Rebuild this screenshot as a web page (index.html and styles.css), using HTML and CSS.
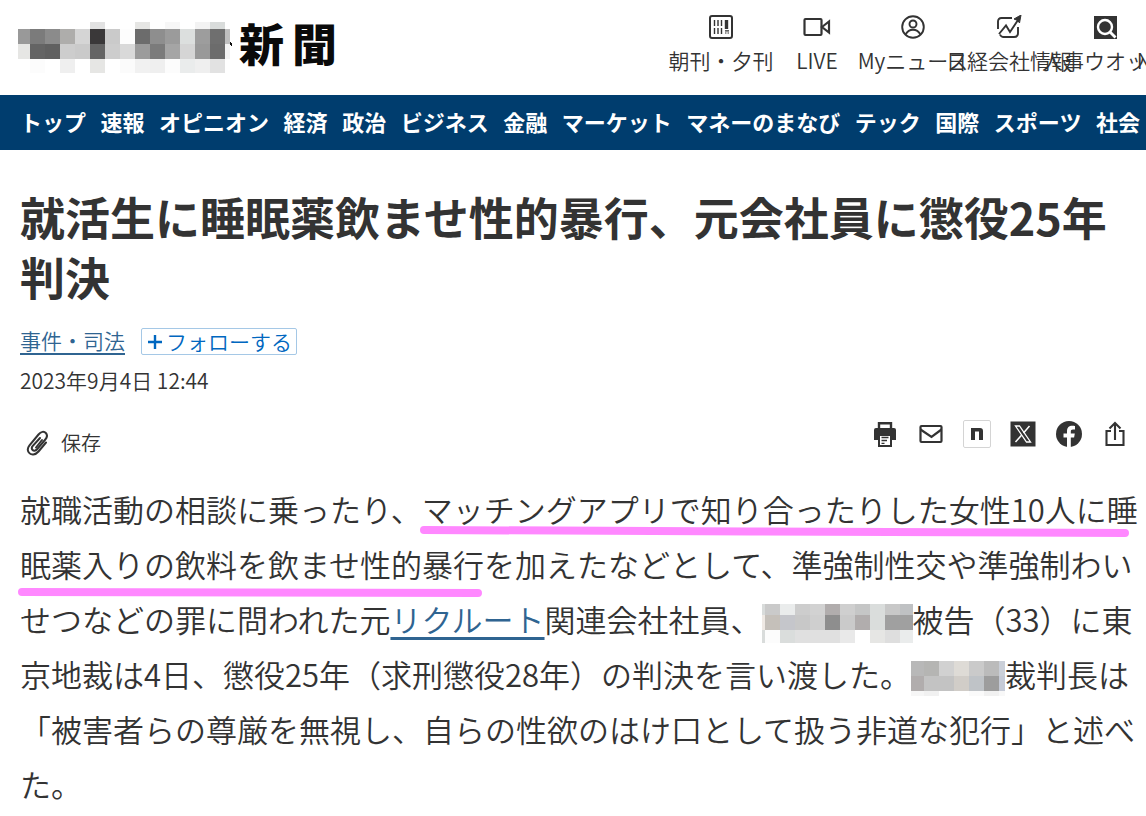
FILE: index.html
```html
<!DOCTYPE html>
<html lang="ja">
<head>
<meta charset="utf-8">
<meta name="viewport" content="width=device-width, initial-scale=1">
<title>就活生に睡眠薬飲ませ性的暴行、元会社員に懲役25年判決</title>
<link rel="stylesheet" href="styles.css">
</head>
<body>
<header class="site-header">
  <a class="brand" href="#">
    <svg class="brand-mosaic" width="216" height="51" viewBox="18 23 216 51" shape-rendering="crispEdges" aria-hidden="true">
      <g><rect x="90" y="23" width="15" height="7" fill="#e2e2e2"/><rect x="135" y="23" width="15" height="7" fill="#e6e6e4"/><rect x="165" y="23" width="15" height="7" fill="#f7f7f7"/><rect x="195" y="23" width="15" height="7" fill="#f3f3f3"/><rect x="210" y="23" width="15" height="7" fill="#d9dcdb"/></g>
      <g><rect x="18" y="30" width="12" height="15" fill="#999"/><rect x="30" y="30" width="15" height="15" fill="#7b7b7b"/><rect x="45" y="30" width="15" height="15" fill="#8b8b8b"/><rect x="60" y="30" width="15" height="15" fill="#aeadab"/><rect x="75" y="30" width="15" height="15" fill="#d5d5d5"/><rect x="90" y="30" width="15" height="15" fill="#3a3839"/><rect x="105" y="30" width="15" height="15" fill="#cacaca"/><rect x="120" y="30" width="15" height="15" fill="#fdfdfd"/><rect x="135" y="30" width="15" height="15" fill="#6c6c6c"/><rect x="150" y="30" width="15" height="15" fill="#8e8e8e"/><rect x="165" y="30" width="15" height="15" fill="#9b9b9b"/><rect x="180" y="30" width="15" height="15" fill="#dcdfde"/><rect x="195" y="30" width="15" height="15" fill="#9d9d9d"/><rect x="210" y="30" width="15" height="15" fill="#6f6f6f"/><rect x="225" y="30" width="5" height="15" fill="#bfbfbf"/></g>
      <g><rect x="18" y="45" width="12" height="15" fill="#e6e6e4"/><rect x="30" y="45" width="15" height="15" fill="#646464"/><rect x="45" y="45" width="15" height="15" fill="#606060"/><rect x="60" y="45" width="15" height="15" fill="#cdcdcd"/><rect x="75" y="45" width="15" height="15" fill="#cacaca"/><rect x="90" y="45" width="15" height="15" fill="#646464"/><rect x="105" y="45" width="15" height="15" fill="#cdcdcd"/><rect x="120" y="45" width="15" height="15" fill="#d9d9d9"/><rect x="135" y="45" width="15" height="15" fill="#9b9b9b"/><rect x="150" y="45" width="15" height="15" fill="#7b7b7b"/><rect x="165" y="45" width="15" height="15" fill="#a5a5a5"/><rect x="180" y="45" width="15" height="15" fill="#d5d5d5"/><rect x="195" y="45" width="15" height="15" fill="#999"/><rect x="210" y="45" width="15" height="15" fill="#6c6c6c"/><rect x="225" y="45" width="5" height="15" fill="#f3f3f3"/></g>
      <g><rect x="30" y="60" width="15" height="14" fill="#fcfcfc"/><rect x="60" y="60" width="15" height="14" fill="#efefef"/><rect x="90" y="60" width="15" height="14" fill="#e6e6e4"/><rect x="120" y="60" width="15" height="14" fill="#fbfbfb"/><rect x="135" y="60" width="15" height="14" fill="#f1f1f1"/><rect x="150" y="60" width="15" height="14" fill="#efefef"/><rect x="165" y="60" width="15" height="14" fill="#fcfcfc"/><rect x="180" y="60" width="15" height="14" fill="#eaecec"/><rect x="195" y="60" width="15" height="14" fill="#efefef"/><rect x="210" y="60" width="15" height="14" fill="#e2e2e2"/></g>
      <path d="M230 43l2 1v3l-2-1z" fill="#111"/>
    </svg>
    <span class="brand-name"><span>新</span><span>聞</span></span>
  </a>
  <nav class="tools" aria-label="サービス">
    <a class="tool" href="#">
      <svg width="24" height="24" viewBox="0 0 24 24" fill="none" stroke="#333" aria-hidden="true"><rect x="1" y="1" width="22" height="22" rx="2" stroke-width="2"/><path d="M5.500 5v6M9 5v6M12.500 5v6M5.500 13v6M9 13v6M12.500 13v6" stroke-width="1.400"/><path d="M17.500 5v9" stroke-width="3.400"/><path d="M16 18h1.500M18.500 18h1.500M16 15.800h4" stroke-width="1.200"/></svg>
      <span>朝刊・夕刊</span>
    </a>
    <a class="tool" href="#">
      <svg width="28" height="24" viewBox="0 0 28 24" fill="none" stroke="#333" stroke-width="2.200" aria-hidden="true"><rect x="1.500" y="4" width="17" height="16" rx="1"/><path d="M19 12l7-5.500v11z"/></svg>
      <span>LIVE</span>
    </a>
    <a class="tool" href="#">
      <svg width="24" height="24" viewBox="0 0 24 24" fill="none" stroke="#333" stroke-width="1.900" aria-hidden="true"><circle cx="12" cy="12" r="10.800"/><circle cx="12" cy="9" r="3.500"/><path d="M4.500 19.500c2-3.500 4.500-4.700 7.500-4.700s5.500 1.200 7.500 4.700"/></svg>
      <span>Myニュース</span>
    </a>
    <a class="tool" href="#">
      <svg width="26" height="24" viewBox="0 0 26 24" fill="none" stroke="#333" stroke-width="1.900" aria-hidden="true"><path d="M2 14V6.500Q2 3 5.500 3H16M4 19.500q1 2.500 3.500 2.500H18q4 0 4-4V12"/><path d="M3 19l7-8.500 4 6.500 8-12"/><path d="M25 0l-1.500 8-1.700-2.500L18 4z" fill="#333" stroke-width="1"/></svg>
      <span>日経会社情報</span>
    </a>
    <a class="tool" href="#">
      <svg width="24" height="24" viewBox="0 0 24 24" aria-hidden="true"><path d="M1 1h23v23H1z" fill="#333"/><circle cx="12" cy="12" r="7" fill="none" stroke="#fff" stroke-width="2.400"/><path d="M17 17l5.500 5.500" stroke="#fff" stroke-width="2.800"/></svg>
      <span>人事ウオッチ</span>
    </a>
    <a class="tool" href="#">
      <svg width="24" height="24" viewBox="0 0 24 24" aria-hidden="true"></svg>
      <span>NIKKEI Prime</span>
    </a>
  </nav>
</header>

<nav class="sections" aria-label="カテゴリー">
  <a href="#">トップ</a><a href="#">速報</a><a href="#">オピニオン</a><a href="#">経済</a><a href="#">政治</a><a href="#">ビジネス</a><a href="#">金融</a><a href="#">マーケット</a><a href="#">マネーのまなび</a><a href="#">テック</a><a href="#">国際</a><a href="#">スポーツ</a><a href="#">社会</a>
</nav>

<main class="article">
  <h1 class="headline">就活生に睡眠薬飲ませ性的暴行、元会社員に懲役25年判決</h1>
  <div class="topic-row">
    <a class="topic" href="#">事件・司法</a>
    <button class="follow" type="button"><svg width="14" height="14" viewBox="0 0 14 14" aria-hidden="true"><path d="M7 0v14M0 7h14" stroke="#0067c0" stroke-width="2.400"/></svg>フォローする</button>
  </div>
  <time class="date" datetime="2023-09-04T12:44">2023年9月4日 12:44</time>
  <div class="actions">
    <button class="save" type="button">
      <svg width="22" height="26" viewBox="0 0 22 26" fill="none" stroke="#333" stroke-width="2" stroke-linecap="round" aria-hidden="true"><path d="M20 12.500l-7.500 9C9.500 25 5 25.500 2.800 22.500 1 20 1.800 17.500 3.500 15.300L12.500 4.500C15 1.500 18 1 19.800 3c1.800 2 1.200 4.500-.5 6.500l-8.500 10c-1.300 1.500-3.200 1.500-4.200.5s-1-2.500 0-3.800L14 8"/><path d="M10 17.500L16 10"/></svg>
      <span>保存</span>
    </button>
    <div class="share">
      <button class="icon" type="button" aria-label="印刷"><svg width="28" height="28" viewBox="0 0 28 28" aria-hidden="true"><path d="M8 8V3.300h12V8" fill="none" stroke="#333" stroke-width="2.400"/><path d="M5 8h18q2 0 2 2v10H3V10q0-2 2-2z" fill="#333"/><path d="M8 15h12v11H8z" fill="#fff" stroke="#333" stroke-width="2"/><path d="M10.500 17.500h7M10.500 20.500h5.500M10.500 23.300h3" stroke="#333" stroke-width="1.300"/></svg></button>
      <button class="icon" type="button" aria-label="メール"><svg width="28" height="28" viewBox="0 0 28 28" fill="none" stroke="#333" stroke-width="2.200" aria-hidden="true"><rect x="3.500" y="6" width="21" height="16" rx="1"/><path d="M3.500 9.500L14.500 17l10-7.500"/></svg></button>
      <button class="icon" type="button" aria-label="note"><svg width="28" height="28" viewBox="0 0 28 28" aria-hidden="true"><rect x=".5" y=".5" width="27" height="27" rx="1.500" fill="#fff" stroke="#d4d4d4"/><path d="M8 20V8h9q3 0 3 3v9h-4v-8.500h-4V20z" fill="#333"/></svg></button>
      <button class="icon" type="button" aria-label="X"><svg width="28" height="28" viewBox="0 0 28 28" fill="none" stroke="#fff" aria-hidden="true"><path d="M1.500 1.500h25v25h-25z" fill="#333" stroke="none"/><path d="M6.500 6h4l11 16h-4z" stroke-width="1.300"/><path d="M20.500 6l-6 7M12.500 15.300L6.500 22" stroke-width="1.500"/></svg></button>
      <button class="icon" type="button" aria-label="Facebook"><svg width="28" height="28" viewBox="0 0 28 28" aria-hidden="true"><circle cx="14" cy="14" r="13" fill="#333"/><path d="M12 28V17.500H8.500v-4H12v-2.300C12 7.500 14 5.700 17.200 5.700c1.300 0 2.300.2 2.800.3v3.500h-2c-1.700 0-2.200.9-2.200 2.200v1.800h4l-.7 4h-3.300V28z" fill="#fff"/></svg></button>
      <button class="icon" type="button" aria-label="共有"><svg width="28" height="28" viewBox="0 0 28 28" fill="none" stroke="#333" stroke-width="2.100" aria-hidden="true"><path d="M10 11H5.500v14h17V11H18M14 20V3M8.500 8.500L14 3l5.500 5.500"/></svg></button>
    </div>
  </div>
  <div class="story">
    <p>就職活動の相談に乗ったり、マッチングアプリで知り合ったりした女性10人に睡<br>眠薬入りの飲料を飲ませ性的暴行を加えたなどとして、準強制性交や準強制わい<br>せつなどの罪に問われた元<a href="#">リクルート</a>関連会社社員、<svg class="mask" width="151" height="39" viewBox="762 604 151 39" shape-rendering="crispEdges" aria-hidden="true"><g><rect x="762" y="604" width="3" height="11" fill="#d9dcdb"/><rect x="765" y="604" width="15" height="11" fill="#cacaca"/><rect x="780" y="604" width="15" height="11" fill="#eaecec"/><rect x="795" y="604" width="15" height="11" fill="#cdcdcd"/><rect x="810" y="604" width="15" height="11" fill="#d2d2d2"/><rect x="825" y="604" width="15" height="11" fill="#b1adad"/><rect x="840" y="604" width="15" height="11" fill="#cfcfcf"/><rect x="855" y="604" width="15" height="11" fill="#c5c6c6"/><rect x="870" y="604" width="15" height="11" fill="#dadddc"/><rect x="885" y="604" width="15" height="11" fill="#c8c8c8"/><rect x="900" y="604" width="13" height="11" fill="#bfc1c3"/></g><g><rect x="762" y="615" width="3" height="15" fill="#efe9e4"/><rect x="765" y="615" width="15" height="15" fill="#c5c0ba"/><rect x="780" y="615" width="15" height="15" fill="#c5c6cb"/><rect x="795" y="615" width="15" height="15" fill="#c8c8c8"/><rect x="810" y="615" width="15" height="15" fill="#cfcfcf"/><rect x="825" y="615" width="15" height="15" fill="#8e8e8e"/><rect x="840" y="615" width="15" height="15" fill="#cacaca"/><rect x="855" y="615" width="15" height="15" fill="#b1adad"/><rect x="870" y="615" width="15" height="15" fill="#dadddc"/><rect x="885" y="615" width="28" height="15" fill="#a0a0a0"/></g><g><rect x="762" y="630" width="3" height="13" fill="#d9dcdb"/><rect x="765" y="630" width="15" height="13" fill="#fcfcfc"/><rect x="780" y="630" width="15" height="13" fill="#dadddc"/><rect x="795" y="630" width="45" height="13" fill="#e0e0e0"/><rect x="840" y="630" width="15" height="13" fill="#e9e9e9"/><rect x="870" y="630" width="15" height="13" fill="#e6e6e4"/><rect x="885" y="630" width="15" height="13" fill="#dedede"/><rect x="900" y="630" width="13" height="13" fill="#eaecec"/></g></svg>被告（33）に東<br>京地裁は4日、懲役25年（求刑懲役28年）の判決を言い渡した。<svg class="mask" width="94" height="39" viewBox="902 658 94 39" shape-rendering="crispEdges" aria-hidden="true"><g><rect x="902" y="660" width="13" height="15" fill="#b8b8b8"/><rect x="915" y="660" width="15" height="15" fill="#b5b5b3"/><rect x="930" y="660" width="15" height="15" fill="#d1d1d1"/><rect x="945" y="660" width="15" height="15" fill="#dedbd6"/><rect x="960" y="660" width="15" height="15" fill="#cacaca"/><rect x="975" y="660" width="15" height="15" fill="#bbb"/><rect x="990" y="660" width="6" height="15" fill="#cacfd8"/></g><g><rect x="902" y="675" width="13" height="15" fill="#b1adad"/><rect x="915" y="675" width="30" height="15" fill="#c3c3c3"/><rect x="945" y="675" width="15" height="15" fill="#d1cdc8"/><rect x="960" y="675" width="15" height="15" fill="#bfc3c7"/><rect x="975" y="675" width="15" height="15" fill="#9d9d9d"/><rect x="990" y="675" width="6" height="15" fill="#c5cad6"/></g><g><rect x="902" y="690" width="13" height="5" fill="#f6f6f6"/><rect x="915" y="690" width="15" height="5" fill="#f1f1f1"/><rect x="960" y="690" width="15" height="5" fill="#fafafa"/><rect x="975" y="690" width="15" height="5" fill="#f1f1f1"/><rect x="990" y="690" width="6" height="5" fill="#f8f8f8"/></g></svg>裁判長は<br>「被害者らの尊厳を無視し、自らの性欲のはけ口として扱う非道な犯行」と述べ<br>た。</p>
    <svg class="marker" width="1126" height="120" viewBox="0 0 1126 120" fill="none" stroke="#ff88ff" stroke-width="8" stroke-linecap="round" aria-hidden="true"><path d="M404 49C620 51 900 50 1105 52"/><path d="M2 111L458 112"/></svg>
  </div>
</main>
</body>
</html>
```
FILE: styles.css
```css
* {
  box-sizing: border-box;
}

body {
  margin: 0;
  overflow-x: hidden;
  background: #fff;
  color: #333;
  font-family: "Noto Sans CJK JP", sans-serif;
  font-weight: 350;
}

a {
  color: inherit;
  text-decoration: none;
}

button {
  padding: 0;
  border: 0;
  background: none;
  color: inherit;
  font: inherit;
  cursor: pointer;
}

svg {
  flex: none;
}

.site-header {
  display: flex;
  justify-content: space-between;
  height: 95px;
  padding-left: 18px;
  overflow: hidden;
}

.brand {
  display: flex;
  flex: none;
  align-items: center;
  gap: 5px;
  color: #0a0a0a;
}

.brand-name {
  display: flex;
  gap: 8px;
  padding-bottom: 10px;
  font-size: 45px;
  font-weight: 900;
  line-height: 52px;
}

.tools {
  display: flex;
  flex: none;
  width: 473px;
  padding-top: 15px;
}

.tool {
  display: flex;
  flex: 0 0 96px;
  flex-direction: column;
  align-items: center;
  gap: 6px;
  min-width: 0;
  font-size: 21px;
  line-height: 30px;
  white-space: nowrap;
}

.sections {
  display: flex;
  justify-content: space-between;
  padding: 0 6px 2px 20px;
  overflow: hidden;
  background: #003d6e;
  color: #fff;
  font-size: 22px;
  font-weight: 700;
  line-height: 53px;
  white-space: nowrap;
}

.article {
  padding: 37px 0 0 20px;
}

.headline {
  margin: 0;
  font-size: 45px;
  font-weight: 700;
  line-height: 60px;
}

.topic-row {
  display: flex;
  align-items: center;
  gap: 16px;
  margin-top: 21px;
  font-size: 21px;
}

.topic {
  border-bottom: 2px solid #2f6491;
  color: #2f6491;
  line-height: 25px;
}

.follow {
  display: flex;
  align-items: center;
  gap: 4px;
  padding: 0 4px 0 6px;
  border: 1px solid #a5c8e6;
  border-radius: 2px;
  color: #0067c0;
  line-height: 25px;
}

.date {
  display: block;
  margin-top: 10px;
  font-size: 21px;
  line-height: 30px;
}

.actions {
  display: flex;
  align-items: flex-start;
  justify-content: space-between;
  margin-top: 25px;
  padding-right: 17px;
}

.save {
  display: flex;
  align-items: center;
  gap: 13px;
  margin-top: 8px;
  padding-left: 6px;
  font-size: 20px;
  line-height: 30px;
}

.share {
  display: flex;
  gap: 18px;
}

.icon {
  display: flex;
}

.story {
  position: relative;
  margin-top: 23px;
}

.story p {
  margin: 0;
  font-size: 31px;
  line-height: 55px;
  white-space: nowrap;
}

.story a {
  color: #2f6491;
  text-decoration: underline;
  text-decoration-thickness: 3px;
  text-underline-offset: 5px;
}

.mask {
  vertical-align: middle;
  margin: -8px 0;
}

.marker {
  position: absolute;
  top: 0;
  left: 0;
  overflow: visible;
  pointer-events: none;
}
```
